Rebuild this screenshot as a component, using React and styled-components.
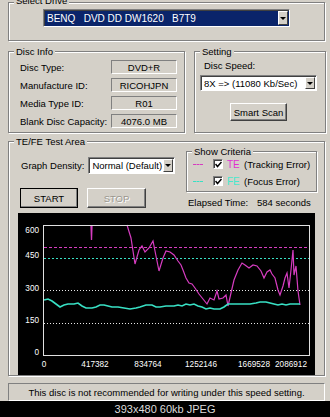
import React from "react"
import styled, { createGlobalStyle } from "styled-components"

const GlobalStyle = createGlobalStyle`
    html, body {
        margin: 0;
        padding: 0;
        background: #000;
    }
    body {
        font-family: "Liberation Sans", Arial, sans-serif;
        font-size: 9.5px;
        color: #000;
    }
`

const GREY = "#d4d0c8"

const Window = styled.div`
    width: 330px;
    height: 401px;
    box-sizing: border-box;
    background: ${GREY};
    padding: 2px 5px 0 8px;
    overflow: hidden;
    display: flex;
    flex-direction: column;
`

const Group = styled.div`
    position: relative;
    box-sizing: border-box;
    border: 1px solid #808080;
    box-shadow: inset 1px 1px 0 #fff, 1px 1px 0 #fff;
    height: ${props => props.$h}px;
    width: ${props => (props.$w ? `${props.$w}px` : "auto")};
    flex: ${props => (props.$w ? "none" : "1")};
`

const Legend = styled.span`
    position: absolute;
    top: ${props => props.$top || -6}px;
    left: 5px;
    padding: 0 2px;
    background: ${GREY};
    line-height: 11px;
    white-space: nowrap;
`

const DriveGroup = styled(Group)`
    display: flex;
    justify-content: center;
    padding-top: 6px;
`

const Combo = styled.div`
    box-sizing: border-box;
    width: ${props => props.$w}px;
    height: ${props => props.$h}px;
    margin-top: ${props => props.$mt || 0}px;
    display: flex;
    align-items: stretch;
    background: ${props => (props.$selected ? "#0a246a" : "#fff")};
    color: ${props => (props.$selected ? "#fff" : "#000")};
    border: 1px solid;
    border-color: #808080 #fff #fff #808080;
    box-shadow: inset 1px 1px 0 #404040;
    padding: 1px 1px 1px 2px;
`

const ComboText = styled.span`
    flex: 1;
    display: flex;
    align-items: center;
    white-space: pre;
    padding-left: 1px;
    font-size: ${props => props.$size || 9.5}px;
`

const DropButton = styled.span`
    box-sizing: border-box;
    width: 10px;
    background: ${GREY};
    border: 1px solid;
    border-color: #fff #404040 #404040 #fff;
    display: flex;
    align-items: center;
    justify-content: center;
    &::after {
        content: "";
        border-left: 3px solid transparent;
        border-right: 3px solid transparent;
        border-top: 3px solid #000;
    }
`

const TopRow = styled.div`
    display: flex;
    gap: 9px;
    margin-top: 10px;
`

const InfoGroup = styled(Group)`
    padding: 8px 7px 0 11px;
    display: flex;
    flex-direction: column;
    gap: 4px;
`

const InfoRow = styled.div`
    height: 14px;
    display: flex;
    align-items: center;
    justify-content: space-between;
`

const ValueBox = styled.span`
    box-sizing: border-box;
    width: 66px;
    height: 14px;
    border: 1px solid;
    border-color: #808080 #fff #fff #808080;
    display: flex;
    align-items: center;
    justify-content: center;
`

const SettingGroup = styled(Group)`
    padding: 8px 8px 0 5px;
    display: flex;
    flex-direction: column;
`

const FieldLabel = styled.span`
    line-height: 11px;
    padding-left: 4px;
`

const Button = styled.button`
    box-sizing: border-box;
    width: ${props => props.$w}px;
    height: ${props => props.$h}px;
    margin-top: ${props => props.$mt || 0}px;
    align-self: ${props => (props.$center ? "center" : "auto")};
    padding: 0;
    font-family: inherit;
    font-size: 9.5px;
    background: ${GREY};
    color: ${props => (props.disabled ? "#9a978f" : "#000")};
    text-shadow: ${props => (props.disabled ? "1px 1px 0 #fff" : "none")};
    border: 1px solid;
    border-color: #fff #404040 #404040 #fff;
    box-shadow: inset -1px -1px 0 #808080;
    outline: ${props => (props.$default ? "1px solid #000" : "none")};
    outline-offset: -1px;
`

const TestGroup = styled(Group)`
    margin-top: 8px;
    display: flex;
    flex-direction: column;
`

const Controls = styled.div`
    display: flex;
    justify-content: space-between;
    padding: 9px 7px 0 11px;
`

const LeftCol = styled.div`
    padding-top: 6px;
    display: flex;
    flex-direction: column;
    gap: 14px;
`

const DensityRow = styled.div`
    display: flex;
    align-items: center;
    gap: 4px;
    padding-left: 1px;
`

const ButtonRow = styled.div`
    display: flex;
    gap: 9px;
`

const RightCol = styled.div`
    width: 131px;
    display: flex;
    flex-direction: column;
    gap: 4px;
`

const CriteriaGroup = styled(Group)`
    padding: 6px 0 0 6px;
    display: flex;
    flex-direction: column;
    gap: 5px;
`

const CriteriaRow = styled.div`
    height: 12px;
    display: flex;
    align-items: center;
`

const Sample = styled.span`
    width: 10px;
    border-top: 1px dashed ${props => props.$color};
    margin-right: 10px;
`

const CheckBox = styled.span`
    box-sizing: border-box;
    width: 10px;
    height: 10px;
    background: #fff;
    border: 1px solid;
    border-color: #808080 #fff #fff #808080;
    box-shadow: inset 1px 1px 0 #404040;
    display: flex;
    align-items: center;
    justify-content: center;
    margin-right: 4px;
`

const Tag = styled.span`
    width: 17px;
    color: ${props => props.$color};
    font-size: 10px;
`

const ElapsedRow = styled.div`
    height: 12px;
    display: flex;
    align-items: center;
    padding-left: 2px;
    white-space: pre;
`

const ElapsedLabel = styled.span`
    width: 69px;
`

const Graph = styled.div`
    width: 297px;
    height: 162px;
    margin: 5px 0 0 9px;
    background: #000;
    svg {
        display: block;
    }
`

const Status = styled.div`
    box-sizing: border-box;
    height: 18px;
    margin-top: 7px;
    border: 1px solid;
    border-color: #808080 #fff #fff #808080;
    display: flex;
    align-items: center;
    justify-content: center;
    white-space: nowrap;
`

const Caption = styled.div`
    height: 16px;
    background: #000;
    color: #dcdcdc;
    font-size: 11px;
    display: flex;
    align-items: center;
    justify-content: center;
`

const Check = () => (
    <svg width="7" height="7" viewBox="0 0 7 7">
        <polyline points="0.5,3 2.5,5.5 6.5,1" fill="none" stroke="#000" strokeWidth="1.5" />
    </svg>
)

const TE_COLOR = "#d63cc0"
const FE_COLOR = "#38e0c4"

const tePoints = "127,217 131,230 135,256 139,242 142,238 145,244 149,240 153,233 156,248 159,263 163,250 166,243 170,244 174,247 178,253 181,257 183,262 186,270 189,275 192,276 195,280 199,286 203,291 207,296 210,290 214,292 217,283 219,291 223,290 226,287 228,298 231,285 234,272 238,262 242,255 245,257 249,260 253,257 257,258 261,263 264,270 267,264 270,262 272,266 275,270 278,282 280,287 283,278 285,270 287,265 289,280 291,262 293,242 294,267 296,258 298,283 300,297"

const fePoints = "44,292 48,291 52,293 56,296 60,299 64,297 68,296 74,296 78,295 82,298 86,300 92,300 96,299 100,297 104,297 108,298 112,299 118,299 124,300 130,301 136,300 140,299 146,297 152,297 156,299 160,299 166,298 170,298 174,298 178,297 182,298 186,296 190,297 194,296 198,298 202,299 206,301 210,300 214,301 220,301 224,299 228,296 232,296 238,296 244,296 250,296 256,295 260,294 266,294 270,295 274,296 278,297 282,296 286,297 290,296 294,296 298,296 300,296"

const yLabels = [
    ["600", 222],
    ["450", 247],
    ["300", 280],
    ["150", 312],
    ["0", 344],
]

const xLabels = [
    ["0", 44],
    ["417382", 95],
    ["834764", 148],
    ["1252146", 201],
    ["1669528", 254],
    ["2086912", 291],
]

const Chart = () => (
    <svg width="297" height="162" viewBox="18 205 297 162" fontFamily="Liberation Sans, Arial, sans-serif" fontSize="8.2">
        <line x1="44" y1="239.5" x2="309" y2="239.5" stroke={TE_COLOR} strokeDasharray="3 2" />
        <line x1="44" y1="250.5" x2="309" y2="250.5" stroke={FE_COLOR} strokeDasharray="2 2" />
        <line x1="44" y1="282.5" x2="309" y2="282.5" stroke="#e8e8e8" strokeDasharray="1 2" />
        <line x1="44" y1="315.5" x2="309" y2="315.5" stroke="#e8e8e8" strokeDasharray="1 2" />
        <polyline points="91,217 91.5,232 92,217" fill="none" stroke={TE_COLOR} strokeWidth="1.3" />
        <polyline points={tePoints} fill="none" stroke={TE_COLOR} strokeWidth="1.2" />
        <polyline points={fePoints} fill="none" stroke={FE_COLOR} strokeWidth="1.6" />
        <rect x="43.5" y="217.5" width="266" height="130" fill="none" stroke="#e0e0e0" />
        {yLabels.map(([t, y]) => (
            <text key={t} x="39" y={y + 3} fill="#fff" textAnchor="end">{t}</text>
        ))}
        {xLabels.map(([t, x]) => (
            <text key={t} x={x} y="359" fill="#fff" textAnchor="middle">{t}</text>
        ))}
    </svg>
)

const info = [
    ["Disc Type:", "DVD+R"],
    ["Manufacture ID:", "RICOHJPN"],
    ["Media Type ID:", "R01"],
    ["Blank Disc Capacity:", "4076.0 MB"],
]

export default function App() {
    return (
        <>
            <GlobalStyle />
            <Window>
                <DriveGroup $h={31}>
                    <Legend $top={-8}>Select Drive</Legend>
                    <Combo $w={247} $h={18} $selected>
                        <ComboText $size={10}>{"BENQ   DVD DD DW1620   B7T9"}</ComboText>
                        <DropButton />
                    </Combo>
                </DriveGroup>

                <TopRow>
                    <InfoGroup $w={177} $h={82}>
                        <Legend>Disc Info</Legend>
                        {info.map(([label, value]) => (
                            <InfoRow key={label}>
                                <span>{label}</span>
                                <ValueBox>{value}</ValueBox>
                            </InfoRow>
                        ))}
                    </InfoGroup>
                    <SettingGroup $h={82}>
                        <Legend>Setting</Legend>
                        <FieldLabel>Disc Speed:</FieldLabel>
                        <Combo $w={117} $h={16} $mt={4}>
                            <ComboText>{"8X => (11080 Kb/Sec)"}</ComboText>
                            <DropButton />
                        </Combo>
                        <Button $w={57} $h={18} $mt={12} $center>Smart Scan</Button>
                    </SettingGroup>
                </TopRow>

                <TestGroup $h={240}>
                    <Legend>TE/FE Test Area</Legend>
                    <Controls>
                        <LeftCol>
                            <DensityRow>
                                <span>Graph Density:</span>
                                <Combo $w={87} $h={17}>
                                    <ComboText>Normal (Default)</ComboText>
                                    <DropButton />
                                </Combo>
                            </DensityRow>
                            <ButtonRow>
                                <Button $w={58} $h={20} $default>START</Button>
                                <Button $w={59} $h={20} disabled>STOP</Button>
                            </ButtonRow>
                        </LeftCol>
                        <RightCol>
                            <CriteriaGroup $h={40}>
                                <Legend>Show Criteria</Legend>
                                <CriteriaRow>
                                    <Sample $color={TE_COLOR} />
                                    <CheckBox><Check /></CheckBox>
                                    <Tag $color="#e030d0">TE</Tag>
                                    <span>(Tracking Error)</span>
                                </CriteriaRow>
                                <CriteriaRow>
                                    <Sample $color={FE_COLOR} />
                                    <CheckBox><Check /></CheckBox>
                                    <Tag $color="#48e8cc">FE</Tag>
                                    <span>(Focus Error)</span>
                                </CriteriaRow>
                            </CriteriaGroup>
                            <ElapsedRow>
                                <ElapsedLabel>Elapsed Time:</ElapsedLabel>
                                <span>584 seconds</span>
                            </ElapsedRow>
                        </RightCol>
                    </Controls>
                    <Graph>
                        <Chart />
                    </Graph>
                </TestGroup>

                <Status>This disc is not recommended for writing under this speed setting.</Status>
            </Window>
            <Caption>393x480 60kb JPEG</Caption>
        </>
    )
}
